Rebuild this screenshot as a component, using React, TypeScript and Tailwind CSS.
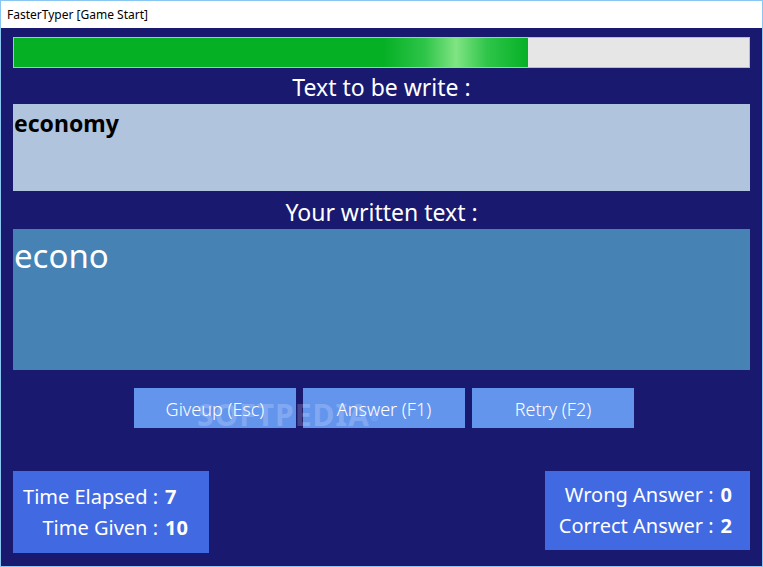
import React from "react";

const font = { fontFamily: '"Noto Sans", "Open Sans", sans-serif' };

export default function App() {
  return (
    <div
      className="w-[763px] h-[567px] border border-[#8ac6f2] bg-[#191970] flex flex-col overflow-hidden relative"
      style={font}
    >
      <div className="h-[27px] bg-white flex items-center pl-[6px] text-[12px] text-black shrink-0">
        FasterTyper [Game Start]
      </div>
      <div className="flex-1 flex flex-col px-[12px] pt-[9px]">
        <div className="h-[31px] border border-[#bcbcbc] bg-[#e6e6e6] flex">
          <div className="w-[514px] h-full bg-[linear-gradient(90deg,#06b025_0%,#06b025_72%,#2fc54a_80%,#80e483_86%,#2fc54a_92%,#06b025_100%)]" />
        </div>
        <div className="h-[36px] flex items-center justify-center text-white text-[23px] leading-none pt-[2px]">
          Text to be write :
        </div>
        <div className="h-[87px] bg-[#b0c4de] px-[1px] pt-[5px] text-[23px] font-bold text-black leading-tight">
          economy
        </div>
        <div className="h-[38px] flex items-center justify-center text-white text-[23px] leading-none pt-[4px]">
          Your written text :
        </div>
        <div className="h-[141px] bg-[#4682b4] px-[1px] pt-[6px] text-[33px] text-white leading-tight">
          econo
        </div>
        <div className="flex justify-center gap-[7px] mt-[18px] pl-[5px]">
          <div className="w-[162px] h-[40px] bg-[#6495ed] text-white text-[18px] font-light flex items-center justify-center pt-[2px]">
            Giveup (Esc)
          </div>
          <div className="w-[162px] h-[40px] bg-[#6495ed] text-white text-[18px] font-light flex items-center justify-center pt-[2px]">
            Answer (F1)
          </div>
          <div className="w-[162px] h-[40px] bg-[#6495ed] text-white text-[18px] font-light flex items-center justify-center pt-[2px]">
            Retry (F2)
          </div>
        </div>
        <div className="flex justify-between items-start mt-[43px]">
          <div className="w-[196px] h-[82px] bg-[#4169e1] text-white text-[20px] flex flex-col justify-center pl-[9px] gap-[1px]">
            <div className="flex">
              <span className="w-[136px] text-right">Time Elapsed :</span>
              <span className="font-bold pl-[7px]">7</span>
            </div>
            <div className="flex">
              <span className="w-[136px] text-right">Time Given :</span>
              <span className="font-bold pl-[7px]">10</span>
            </div>
          </div>
          <div className="w-[205px] h-[79px] bg-[#4169e1] text-white text-[20px] flex flex-col justify-center gap-[1px]">
            <div className="flex justify-end pr-[18px]">
              <span>Wrong Answer :</span>
              <span className="font-bold pl-[7px]">0</span>
            </div>
            <div className="flex justify-end pr-[18px]">
              <span>Correct Answer :</span>
              <span className="font-bold pl-[7px]">2</span>
            </div>
          </div>
        </div>
      </div>
      <div className="absolute left-[196px] top-[391px] text-[30px] font-bold text-white/20 tracking-[1px] pointer-events-none">
        SOFTPEDIA<sup className="text-[10px]">®</sup>
      </div>
    </div>
  );
}
